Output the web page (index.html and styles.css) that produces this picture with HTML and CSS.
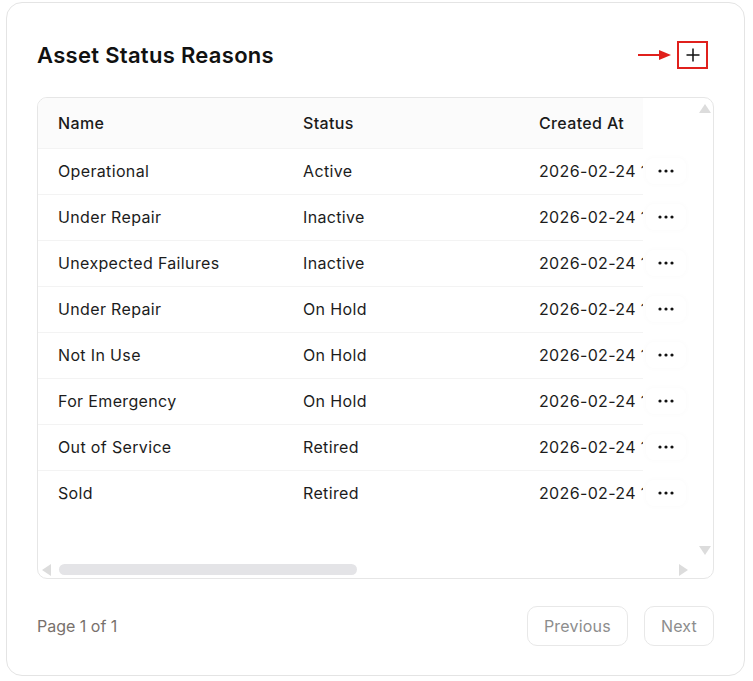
FILE: index.html
```html
<!DOCTYPE html>
<html lang="en">
<head>
    <meta charset="UTF-8">
    <meta name="viewport" content="width=device-width, initial-scale=1.0">
    <title>Asset Status Reasons</title>
    <link rel="stylesheet" href="styles.css">
</head>
<body>
    <div class="card">
        <div class="card-header">
            <h2 class="card-title">Asset Status Reasons</h2>
            <div class="add-wrap">
                <svg class="pointer" width="36" height="12" viewBox="0 0 36 12">
                    <line x1="1" y1="6" x2="24" y2="6" stroke="#e0201c" stroke-width="2"/>
                    <polygon points="22,1 34,6 22,11" fill="#e0201c"/>
                </svg>
                <button class="add-btn" aria-label="Add">
                    <svg width="16" height="16" viewBox="0 0 16 16">
                        <path d="M8 1.5v13M1.5 8h13" stroke="#111" stroke-width="1.5" fill="none"/>
                    </svg>
                </button>
            </div>
        </div>

        <div class="table-wrap">
            <div class="table-view">
                <table class="table">
                    <thead>
                        <tr>
                            <th class="col-name">Name</th>
                            <th class="col-status">Status</th>
                            <th class="col-date">Created At</th>
                            <th class="col-date">Updated At</th>
                            <th class="col-by">Created By</th>
                            <th class="col-actions"></th>
                        </tr>
                    </thead>
                    <tbody>
                        <tr><td>Operational</td><td>Active</td><td>2026-02-24 10:12 AM</td><td>2026-02-24 10:12 AM</td><td>admin</td><td class="col-actions"><button class="more-btn"><svg width="16" height="4" viewBox="0 0 16 4"><circle cx="2" cy="2" r="1.6"/><circle cx="8" cy="2" r="1.6"/><circle cx="14" cy="2" r="1.6"/></svg></button></td></tr>
                        <tr><td>Under Repair</td><td>Inactive</td><td>2026-02-24 10:12 AM</td><td>2026-02-24 10:12 AM</td><td>admin</td><td class="col-actions"><button class="more-btn"><svg width="16" height="4" viewBox="0 0 16 4"><circle cx="2" cy="2" r="1.6"/><circle cx="8" cy="2" r="1.6"/><circle cx="14" cy="2" r="1.6"/></svg></button></td></tr>
                        <tr><td>Unexpected Failures</td><td>Inactive</td><td>2026-02-24 10:12 AM</td><td>2026-02-24 10:12 AM</td><td>admin</td><td class="col-actions"><button class="more-btn"><svg width="16" height="4" viewBox="0 0 16 4"><circle cx="2" cy="2" r="1.6"/><circle cx="8" cy="2" r="1.6"/><circle cx="14" cy="2" r="1.6"/></svg></button></td></tr>
                        <tr><td>Under Repair</td><td>On Hold</td><td>2026-02-24 10:12 AM</td><td>2026-02-24 10:12 AM</td><td>admin</td><td class="col-actions"><button class="more-btn"><svg width="16" height="4" viewBox="0 0 16 4"><circle cx="2" cy="2" r="1.6"/><circle cx="8" cy="2" r="1.6"/><circle cx="14" cy="2" r="1.6"/></svg></button></td></tr>
                        <tr><td>Not In Use</td><td>On Hold</td><td>2026-02-24 10:12 AM</td><td>2026-02-24 10:12 AM</td><td>admin</td><td class="col-actions"><button class="more-btn"><svg width="16" height="4" viewBox="0 0 16 4"><circle cx="2" cy="2" r="1.6"/><circle cx="8" cy="2" r="1.6"/><circle cx="14" cy="2" r="1.6"/></svg></button></td></tr>
                        <tr><td>For Emergency</td><td>On Hold</td><td>2026-02-24 10:12 AM</td><td>2026-02-24 10:12 AM</td><td>admin</td><td class="col-actions"><button class="more-btn"><svg width="16" height="4" viewBox="0 0 16 4"><circle cx="2" cy="2" r="1.6"/><circle cx="8" cy="2" r="1.6"/><circle cx="14" cy="2" r="1.6"/></svg></button></td></tr>
                        <tr><td>Out of Service</td><td>Retired</td><td>2026-02-24 10:12 AM</td><td>2026-02-24 10:12 AM</td><td>admin</td><td class="col-actions"><button class="more-btn"><svg width="16" height="4" viewBox="0 0 16 4"><circle cx="2" cy="2" r="1.6"/><circle cx="8" cy="2" r="1.6"/><circle cx="14" cy="2" r="1.6"/></svg></button></td></tr>
                        <tr><td>Sold</td><td>Retired</td><td>2026-02-24 10:12 AM</td><td>2026-02-24 10:12 AM</td><td>admin</td><td class="col-actions"><button class="more-btn"><svg width="16" height="4" viewBox="0 0 16 4"><circle cx="2" cy="2" r="1.6"/><circle cx="8" cy="2" r="1.6"/><circle cx="14" cy="2" r="1.6"/></svg></button></td></tr>
                    </tbody>
                </table>
            </div>
            <div class="vbar">
                <span class="arrow arrow-up"></span>
                <span class="arrow arrow-down"></span>
            </div>
            <div class="hbar">
                <span class="arrow arrow-left"></span>
                <span class="hbar-thumb"></span>
                <span class="arrow arrow-right"></span>
            </div>
        </div>

        <div class="card-footer">
            <span class="page-info">Page 1 of 1</span>
            <div class="pager">
                <button class="page-btn" disabled>Previous</button>
                <button class="page-btn" disabled>Next</button>
            </div>
        </div>
    </div>
</body>
</html>
```

FILE: styles.css
```css
body {
    margin: 0;
    padding: 2px 8px 6px 6px;
    font-family: Inter, "Noto Sans", sans-serif;
    color: #1c1c1c;
    background: #fff;
}
.card {
    border: 1px solid #e4e4e4;
    border-radius: 16px;
    padding: 30px 30px 29px 30px;
    background: white;
}
.card-header {
    display: flex;
    align-items: center;
    justify-content: space-between;
    height: 44px;
    margin-bottom: 20px;
}
.card-title {
    margin: 0;
    font-size: 22px;
    font-weight: 600;
    color: #111;
    letter-spacing: 0.3px;
}
.add-wrap {
    display: flex;
    align-items: center;
    gap: 4px;
    margin-right: 6px;
}
.add-btn {
    width: 31px;
    height: 28px;
    padding: 0;
    border: 2px solid #e0201c;
    background: white;
    display: flex;
    align-items: center;
    justify-content: center;
    cursor: pointer;
}

/* table box: view + always-visible scrollbars */
.table-wrap {
    height: 482px;
    box-sizing: border-box;
    border: 1px solid #e6e6e6;
    border-radius: 10px;
    overflow: hidden;
    display: grid;
    grid-template-columns: 1fr 16px;
    grid-template-rows: 1fr 17px;
}
.table-view {
    overflow: hidden;
    min-width: 0;
}
.vbar {
    display: flex;
    flex-direction: column;
    justify-content: space-between;
    align-items: center;
    padding: 6px 0 6px;
}
.hbar {
    grid-column: 1 / -1;
    display: flex;
    align-items: center;
    padding: 0 25px 0 4px;
}
.hbar-thumb {
    width: 298px;
    height: 11px;
    margin-left: 8px;
    margin-right: auto;
    border-radius: 6px;
    background: #e4e4e7;
}
.arrow {
    width: 0;
    height: 0;
    border-style: solid;
    border-color: transparent;
}
.arrow-up {
    border-width: 0 6.5px 9px 6.5px;
    border-bottom-color: #dcdcdc;
}
.arrow-down {
    border-width: 9px 6.5px 0 6.5px;
    border-top-color: #dcdcdc;
}
.arrow-left {
    border-width: 6px 9px 6px 0;
    border-right-color: #dcdcdc;
}
.arrow-right {
    border-width: 6px 0 6px 9px;
    border-left-color: #dcdcdc;
}

.table {
    border-collapse: collapse;
    table-layout: fixed;
    width: 1390px;
    font-size: 16px;
    letter-spacing: 0.35px;
}
.table th,
.table td {
    box-sizing: border-box;
    padding: 0 20px;
    text-align: left;
    white-space: nowrap;
    overflow: hidden;
}
.table th {
    height: 50px;
    font-weight: 500;
    color: #1a1a1a;
    background: #fbfbfb;
}
.table td {
    height: 46px;
    border-top: 1px solid #f3f3f3;
}
.col-name { width: 245px; }
.col-status { width: 236px; }
.col-date { width: 240px; }
.col-by { width: 375px; }
.table .col-actions {
    width: 54px;
    padding: 0 0 0 3px;
    position: sticky;
    right: 0;
    background: white;
    border-top: none;
}
.more-btn {
    width: 40px;
    height: 26px;
    border: none;
    border-radius: 8px;
    background: white;
    box-shadow: 0 0 6px rgba(0, 0, 0, 0.025);
    display: flex;
    align-items: center;
    justify-content: center;
    fill: #111;
    cursor: pointer;
    padding: 0;
}
.card-footer {
    display: flex;
    align-items: center;
    justify-content: space-between;
    margin-top: 27px;
}
.page-info {
    font-size: 16px;
    color: #78716c;
}
.pager {
    display: flex;
    gap: 16px;
}
.page-btn {
    height: 40px;
    padding: 0 16px;
    border: 1px solid #e8e8e8;
    border-radius: 10px;
    background: white;
    font-family: inherit;
    font-size: 16px;
    letter-spacing: 0.2px;
    color: #8d8d8d;
}
```
